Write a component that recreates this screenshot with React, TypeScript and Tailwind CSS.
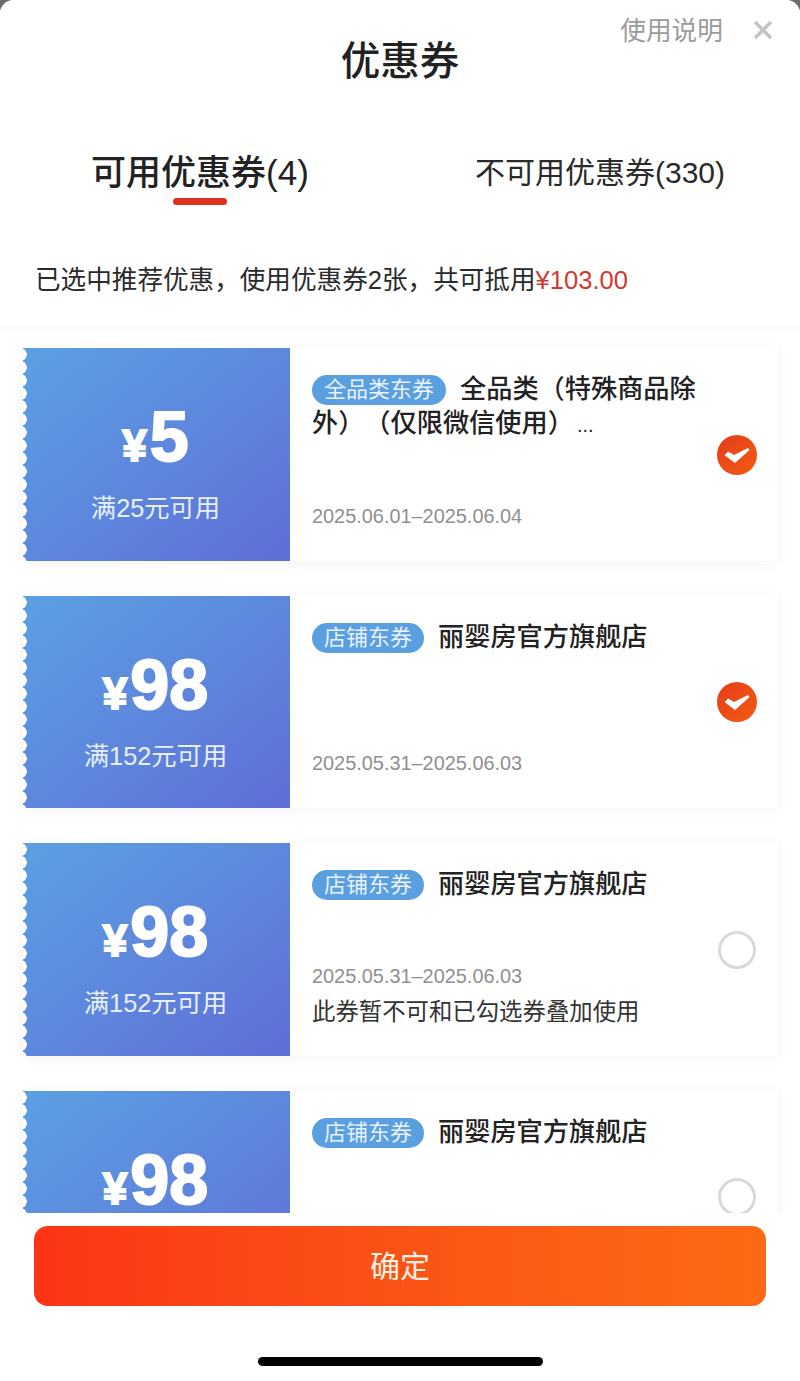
const coupons = [
  {
    amount: "5",
    rule: "满25元可用",
    tag: "全品类东券",
    title: "全品类（特殊商品除外）（仅限微信使用）",
    more: true,
    date: "2025.06.01–2025.06.04",
    checked: true,
  },
  {
    amount: "98",
    rule: "满152元可用",
    tag: "店铺东券",
    title: "丽婴房官方旗舰店",
    date: "2025.05.31–2025.06.03",
    checked: true,
  },
  {
    amount: "98",
    rule: "满152元可用",
    tag: "店铺东券",
    title: "丽婴房官方旗舰店",
    date: "2025.05.31–2025.06.03",
    note: "此券暂不可和已勾选券叠加使用",
    checked: false,
  },
  // last one is cut off by the footer, its lower texts never show
  {
    amount: "98",
    rule: "",
    tag: "店铺东券",
    title: "丽婴房官方旗舰店",
    date: "",
    checked: false,
  },
];

type Coupon = {
  amount: string;
  rule: string;
  tag: string;
  title: string;
  more?: boolean;
  date: string;
  note?: string;
  checked: boolean;
};

function CouponCard({ coupon }: { coupon: Coupon }) {
  return (
    <div className="flex h-[212.5px] shrink-0 bg-white shadow-[0_2px_12px_rgba(0,0,0,0.05)]">
      {/* blue stub */}
      <div className="relative flex w-[267px] shrink-0 flex-col items-center bg-gradient-to-br from-[#5aa0e2] to-[#5f6ed8] pr-[2px] pt-[53px] text-white">
        {/* scalloped edge */}
        <div className="absolute inset-y-0 left-0 w-[4px] bg-[radial-gradient(circle_at_-3px_50%,#ffffff_6.5px,transparent_7px)] bg-[length:4px_13px]" />
        <div className="flex h-[72px] items-baseline font-['Liberation_Sans',sans-serif] leading-[72px] [-webkit-text-stroke:2px_white]">
          <span className="mr-[3px] text-[44px] font-bold">¥</span>
          <span className="text-[70px] font-bold">{coupon.amount}</span>
        </div>
        <div className="mt-[19px] text-[25.3px] leading-[32px] text-[#e8f0fb]">{coupon.rule}</div>
      </div>

      {/* details */}
      <div className="flex min-w-0 flex-1 flex-col pl-[22px] pt-[24px]">
        <div className="w-[392px] text-[26.2px] font-medium leading-[34px] text-[#222222] [text-spacing-trim:space-all]">
          <span className="mr-[14px] inline-block h-[30px] rounded-full bg-[#5a9fdf] px-[12px] align-[1px] text-[22px] font-normal leading-[30px] text-[#e8f2fc]">
            {coupon.tag}
          </span>
          {coupon.title}
          {coupon.more && <span className="ml-[3px] text-[20px] font-normal">...</span>}
        </div>
        <div className={coupon.note ? "mt-auto pb-[28px]" : "mt-auto pb-[31px]"}>
          <div className="text-[19.9px] leading-[28px] text-[#8f8f8f]">{coupon.date}</div>
          {coupon.note && (
            <div className="mt-[6px] text-[23.4px] leading-[32px] text-[#333333]">{coupon.note}</div>
          )}
        </div>
      </div>

      {/* select state */}
      <div className="flex items-center pr-[21px] pt-[1px]">
        {coupon.checked ? (
          <div className="flex h-[40px] w-[40px] items-center justify-center rounded-full bg-gradient-to-br from-[#e63a1c] to-[#f25c0e]">
            <svg viewBox="0 0 40 40" className="h-[40px] w-[40px]">
              <path d="M8 20 11 17 17 20.5 31 13.5 32 15 18 27.5Z" fill="#fff" stroke="#fff" strokeWidth="1" strokeLinejoin="round" />
            </svg>
          </div>
        ) : (
          <div className="mx-[1px] h-[38px] w-[38px] rounded-full border-[3px] border-[#d9d9d9]" />
        )}
      </div>
    </div>
  );
}

export default function App() {
  return (
    <div className="h-[1381px] w-[800px] overflow-hidden bg-[#6b6b6b]">
      <div className="flex h-full flex-col overflow-hidden rounded-t-[14px] bg-white font-['Liberation_Sans','Noto_Sans_CJK_SC',sans-serif]">
        <div className="relative z-10 shrink-0 bg-white shadow-[0_2px_8px_rgba(0,0,0,0.04)]">
          {/* title row */}
          <div className="grid h-[112px] grid-cols-[1fr_auto_1fr]">
            <div />
            <h1 className="mt-[37px] text-[39.5px] font-medium leading-[48px] text-[#222222]">优惠券</h1>
            <div className="flex justify-end pr-[27px] pt-[15px]">
              <span className="text-[25.7px] leading-[32px] text-[#9b9b9b]">使用说明</span>
              <svg viewBox="0 0 20 20" className="ml-[30px] mt-[5px] h-[20px] w-[20px] text-[#c4c4c4]">
                <path d="M2 2 18 18M18 2 2 18" stroke="currentColor" strokeWidth="3.4" fill="none" />
              </svg>
            </div>
          </div>

          {/* tabs */}
          <div className="mt-[39px] grid grid-cols-2">
            <div className="flex flex-col items-center">
              <span className="text-[35px] font-medium leading-[44px] text-[#222222]">可用优惠券(4)</span>
              <span className="mt-[3px] h-[7px] w-[54px] rounded-full bg-[#df3120]" />
            </div>
            <div className="flex justify-center">
              <span className="text-[30px] leading-[44px] text-[#2a2a2a]">不可用优惠券(330)</span>
            </div>
          </div>

          {/* summary */}
          <p className="mb-[28px] ml-[35px] mt-[57px] text-[25.6px] leading-[36px] text-[#2a2a2a]">
            已选中推荐优惠，使用优惠券2张，共可抵用
            <span className="text-[#cf3a33]">¥103.00</span>
          </p>
        </div>

        {/* coupon list */}
        <div className="flex min-h-0 flex-1 flex-col gap-[35px] overflow-hidden pl-[23px] pr-[22px] pt-[22px]">
          {coupons.map((c, i) => (
            <CouponCard key={i} coupon={c} />
          ))}
        </div>

        {/* footer */}
        <div className="relative z-10 h-[168px] shrink-0 bg-white px-[34px] pt-[13px]">
          <button className="h-[80px] w-full rounded-[14px] bg-gradient-to-r from-[#fb3416] to-[#fb6a14] text-[30px] text-[#fff1e4]">
            确定
          </button>
          <div className="mx-auto mt-[51px] h-[9px] w-[285px] rounded-full bg-black" />
        </div>
      </div>
    </div>
  );
}
